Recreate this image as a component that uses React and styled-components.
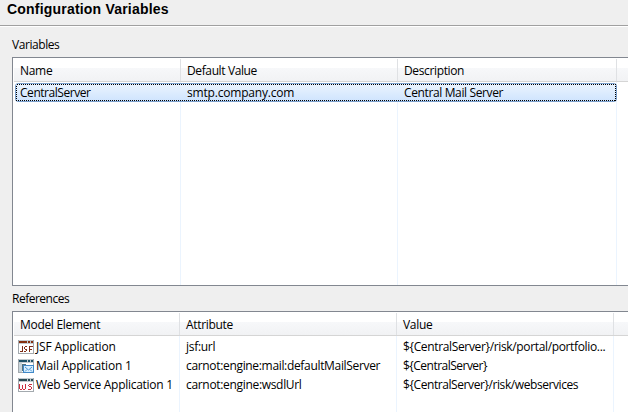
import React from 'react';
import styled, { createGlobalStyle } from 'styled-components';

const Global = createGlobalStyle`
  * { box-sizing: border-box; }
  html, body { margin: 0; background: #efefef; overflow: hidden; }
`;

const Page = styled.main`
  width: 628px;
  height: 412px;
  overflow: hidden;
  display: flex;
  flex-direction: column;
  background: #efefef;
  color: #000;
  font: 12px/16px "Open Sans", "Noto Sans", sans-serif;
  white-space: nowrap;
`;

const TitleBar = styled.header`
  flex: none;
  height: 27px;
  padding: 1px 0 0 7px;
  border-bottom: 1px solid #fff;
  box-shadow: inset 0 -1px #a0a0a0;
`;

const Title = styled.h1`
  margin: 0;
  font: bold 14px/17px "Liberation Sans", Arial, sans-serif;
  letter-spacing: ${p => p.$track}px;
`;

const SectionLabel = styled.h2`
  flex: none;
  margin: 0;
  padding: ${p => p.$top}px 0 0 12px;
  height: ${p => p.$height}px;
  font: inherit;
`;

const Text = styled.span`
  letter-spacing: ${p => p.$track || 0}px;
`;

const Table = styled.section`
  flex: none;
  width: 640px;
  height: ${p => p.$height}px;
  margin-left: 12px;
  border: 1px solid #828790;
  padding: 1px 0 0 1px;
  background: #fff;
  display: flex;
  flex-direction: column;
`;

const HeaderRow = styled.div`
  flex: none;
  display: grid;
  grid-template-columns: ${p => p.$cols};
  height: 23px;
  background: linear-gradient(#fff 0 9px, #f7f8fa 9px, #f1f2f4 22px);
  border-bottom: 1px solid #d5d5d5;
`;

const HeaderCell = styled.div`
  padding: 4px 0 0 6px;
  border-right: 1px solid #dfe1e4;
`;

const Body = styled.div`
  flex: 1;
  display: grid;
  grid-template-columns: ${p => p.$cols};
  grid-template-rows: ${p => p.$rows};
  padding-top: ${p => p.$top}px;
  background: linear-gradient(#ebf4fe, #ebf4fe) ${p => p.$lines[0]}px 0 / 1px 100% no-repeat,
    linear-gradient(#ebf4fe, #ebf4fe) ${p => p.$lines[1]}px 0 / 1px 100% no-repeat,
    linear-gradient(#ebf4fe, #ebf4fe) ${p => p.$lines[2]}px 0 / 1px 100% no-repeat;
`;

const Row = styled.div`
  grid-column: 1 / -1;
  display: grid;
  grid-template-columns: subgrid;
  align-items: center;
`;

const Cell = styled.div`
  display: flex;
  align-items: center;
  gap: 2px;
  padding-left: ${p => (p.$icon ? 4 : 6)}px;
`;

const SelectedRow = styled(Row)`
  grid-column: 1 / 4;
  margin-left: 1px;
  border: 1px solid #7da2ce;
  border-radius: 3px;
  background: linear-gradient(#ebf4fe, #cfe4fe);
  position: relative;
  & > ${Cell}:first-of-type { margin-left: -2px; }
`;

const FocusRing = styled.svg`
  position: absolute;
  left: 0;
  top: -1px;
  width: 601px;
  height: 19px;
`;

const Icon = styled.svg`
  flex: none;
  width: 16px;
  height: 14px;
`;

function WindowFrame({ bar }) {
  return (
    <>
      <rect x="0.5" y="0.5" width="15" height="13" fill="#fff" stroke="#a3a9ae" />
      <rect x="1" y="0" width="14" height="4" fill="#c3cbd0" />
      <path d="M1 2h8M10 2h2M13 2h2" stroke={bar} strokeWidth="2" />
    </>
  );
}

const JsfIcon = () => (
  <Icon viewBox="0 0 16 14" shapeRendering="crispEdges">
    <WindowFrame bar="#84300f" />
    <path d="M4.5 6v6M2 11.5h2M9 6.5H7M6.5 7v2M7 9.5h1M8.5 9v2M6 11.5h2M11.5 6v6M11 6.5h4M11 9.5h3" fill="none" stroke="#7e2d16" />
  </Icon>
);

const MailIcon = () => (
  <Icon viewBox="0 0 16 14" shapeRendering="crispEdges">
    <WindowFrame bar="#1f5268" />
    <path d="M1 4h3v9H1z" fill="#c9d5db" />
    <path d="M4 5h4v7H4z" fill="#53717e" />
    <rect x="5.5" y="6.5" width="10" height="7" fill="#d9efff" stroke="#4189c8" />
    <path d="M7 8l3.5 3L14 8M7 12.5l2-2M14 12.5l-2-2" fill="none" stroke="#4b95d2" shapeRendering="auto" />
  </Icon>
);

const WebServiceIcon = () => (
  <Icon viewBox="0 0 16 14" shapeRendering="crispEdges">
    <WindowFrame bar="#2a4c54" />
    <path d="M1.5 6v5M2 11.5h2M4.5 7v4M5 11.5h2M7.5 6v5M14 6.5h-3M10.5 7v1M11 8.5h2M13.5 9v2M10 11.5h3" fill="none" stroke="#cc3040" />
  </Icon>
);

const VAR_COLS = '167px 217px 219px 1fr';
const REF_COLS = '166px 217px 217px 1fr';

const references = [
  { icon: <JsfIcon />, name: ['JSF Application', -0.13], attr: ['jsf:url', -0.3], value: ['${CentralServer}/risk/portal/portfolio...', -0.35] },
  { icon: <MailIcon />, name: ['Mail Application 1', -0.2], attr: ['carnot:engine:mail:defaultMailServer', -0.33], value: ['${CentralServer}', -0.52] },
  { icon: <WebServiceIcon />, name: ['Web Service Application 1', -0.28], attr: ['carnot:engine:wsdlUrl', -0.32], value: ['${CentralServer}/risk/webservices', -0.42] },
];

const Label = ({ t }) => <Text $track={t[1]}>{t[0]}</Text>;

function Header({ cols, items }) {
  return (
    <HeaderRow $cols={cols}>
      {items.map(t => <HeaderCell key={t[0]}><Label t={t} /></HeaderCell>)}
    </HeaderRow>
  );
}

export default function App() {
  return (
    <Page>
      <Global />
      <TitleBar><Title $track={0.2}>Configuration Variables</Title></TitleBar>
      <SectionLabel $top={10} $height={30}><Label t={['Variables', -0.44]} /></SectionLabel>
      <Table $height={229}>
        <Header cols={VAR_COLS} items={[['Name', -0.3], ['Default Value', -0.38], ['Description', -0.36]]} />
        <Body $cols={VAR_COLS} $rows="19px" $top={1} $lines={[166, 383, 602]}>
          <SelectedRow>
            <FocusRing><rect x="0.5" y="1.5" width="599" height="16" fill="none" stroke="#000" strokeDasharray="1 1" shapeRendering="crispEdges" /></FocusRing>
            <Cell><Label t={['CentralServer', -0.46]} /></Cell>
            <Cell><Label t={['smtp.company.com', -0.19]} /></Cell>
            <Cell><Label t={['Central Mail Server', -0.37]} /></Cell>
          </SelectedRow>
        </Body>
      </Table>
      <SectionLabel $top={5} $height={25}><Label t={['References', -0.5]} /></SectionLabel>
      <Table $height={120}>
        <Header cols={REF_COLS} items={[['Model Element', -0.31], ['Attribute', -0.33], ['Value', -0.3]]} />
        <Body $cols={REF_COLS} $rows="19px 19px 19px" $top={1} $lines={[165, 382, 599]}>
          {references.map(r => (
            <Row key={r.name[0]}>
              <Cell $icon>{r.icon}<Label t={r.name} /></Cell>
              <Cell><Label t={r.attr} /></Cell>
              <Cell><Label t={r.value} /></Cell>
            </Row>
          ))}
        </Body>
      </Table>
    </Page>
  );
}
